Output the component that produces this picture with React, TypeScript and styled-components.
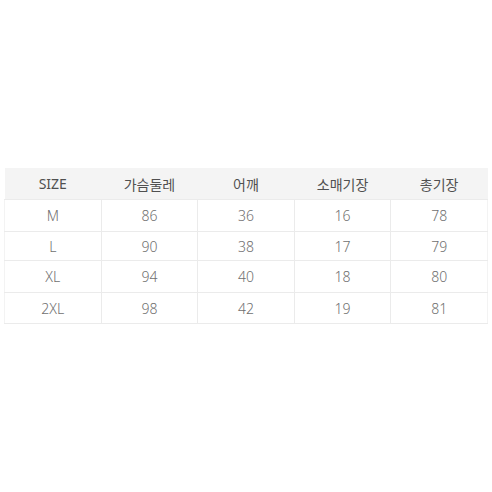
import styled, { createGlobalStyle } from "styled-components";

const Global = createGlobalStyle`
  html, body {
    margin: 0;
    padding: 0;
    background: #ffffff;
  }
  body {
    font-family: "Noto Sans", "Noto Sans CJK KR", sans-serif;
  }
`;

const Page = styled.div`
  width: 492px;
  height: 492px;
  padding: 168px 4px 0 4px;
  box-sizing: border-box;
`;

const Table = styled.table`
  width: 484px;
  border-collapse: collapse;
  table-layout: fixed;
`;

const HeadCell = styled.th`
  height: 31px;
  padding: 0;
  background: #f4f4f4;
  color: #505050;
  font-size: 14px;
  font-weight: 400;
  text-align: center;
  border-bottom: 1px solid #ebebeb;
`;

const Cell = styled.td<{ $h: number }>`
  height: ${(p) => p.$h}px;
  padding: 0;
  color: #6f6f6f;
  font-size: 14px;
  font-weight: 300;
  text-align: center;
  border: 1px solid #ebebeb;
  &:first-child {
    border-left-color: #f3f3f3;
  }
  &:last-child {
    border-right-color: #f3f3f3;
  }
`;

const headers = ["SIZE", "가슴둘레", "어깨", "소매기장", "총기장"];

const rows = [
  { h: 31, cells: ["M", "86", "36", "16", "78"] },
  { h: 28, cells: ["L", "90", "38", "17", "79"] },
  { h: 31, cells: ["XL", "94", "40", "18", "80"] },
  { h: 30, cells: ["2XL", "98", "42", "19", "81"] },
];

export default function App() {
  return (
    <>
      <Global />
      <Page>
        <Table>
          <thead>
            <tr>
              {headers.map((h) => (
                <HeadCell key={h}>{h}</HeadCell>
              ))}
            </tr>
          </thead>
          <tbody>
            {rows.map((r) => (
              <tr key={r.cells[0]}>
                {r.cells.map((c, i) => (
                  <Cell key={i} $h={r.h}>
                    {c}
                  </Cell>
                ))}
              </tr>
            ))}
          </tbody>
        </Table>
      </Page>
    </>
  );
}
